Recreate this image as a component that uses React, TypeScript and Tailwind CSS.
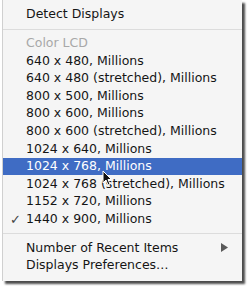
const RESOLUTIONS = [
  "640 x 480, Millions",
  "640 x 480 (stretched), Millions",
  "800 x 500, Millions",
  "800 x 600, Millions",
  "800 x 600 (stretched), Millions",
  "1024 x 640, Millions",
  "1024 x 768, Millions",
  "1024 x 768 (stretched), Millions",
  "1152 x 720, Millions",
  "1440 x 900, Millions",
];

const HIGHLIGHTED = "1024 x 768, Millions";
const CHECKED = "1440 x 900, Millions";

function Separator() {
  return <div className="h-[11px] flex items-center"><div className="h-px w-full bg-[#dcdcdc]" /></div>;
}

function Row({ label, active, checked, disabled, submenu }: { label: string; active?: boolean; checked?: boolean; disabled?: boolean; submenu?: boolean }) {
  return (
    <div
      className={
        "relative h-[17.6px] flex items-center pl-[23px] pr-3 " +
        (active ? "bg-[#3f6cc4] text-white" : disabled ? "text-[#a8a8a8]" : "text-[#151515]")
      }
    >
      {checked && <span className="absolute left-[7px] text-[13px] text-[#444]">✓</span>}
      <span className="flex-1 whitespace-nowrap">{label}</span>
      {submenu && (
        <svg width="7" height="9" viewBox="0 0 7 9" className="mr-[2px]">
          <path d="M0 0 L7 4.5 L0 9 Z" fill="#5a5a5a" />
        </svg>
      )}
    </div>
  );
}

export default function App() {
  return (
    <div className="relative w-[250px] h-[286px] bg-white overflow-hidden" style={{ fontFamily: '"DejaVu Sans", "Liberation Sans", sans-serif' }}>
      <div className="ml-[2px] w-[240px] h-[281px] bg-[#f5f5f5] border-l border-[#d0d0d0] shadow-[3px_3px_2px_rgba(0,0,0,0.7)] text-[12.5px] pt-[6px]">
        <Row label="Detect Displays" />
        <Separator />
        <Row label="Color LCD" disabled />
        {RESOLUTIONS.map((r) => (
          <Row key={r} label={r} active={r === HIGHLIGHTED} checked={r === CHECKED} />
        ))}
        <Separator />
        <Row label="Number of Recent Items" submenu />
        <Row label="Displays Preferences…" />
      </div>
      {/* mouse pointer */}
      <svg width="10" height="16" viewBox="0 0 10 16" className="absolute left-[102px] top-[170px]">
        <path d="M1 1 L1 13 L4 10 L6 15 L8 14 L6 9.5 L9.5 9.5 Z" fill="#111" stroke="#fff" strokeWidth="1" />
      </svg>
    </div>
  );
}
